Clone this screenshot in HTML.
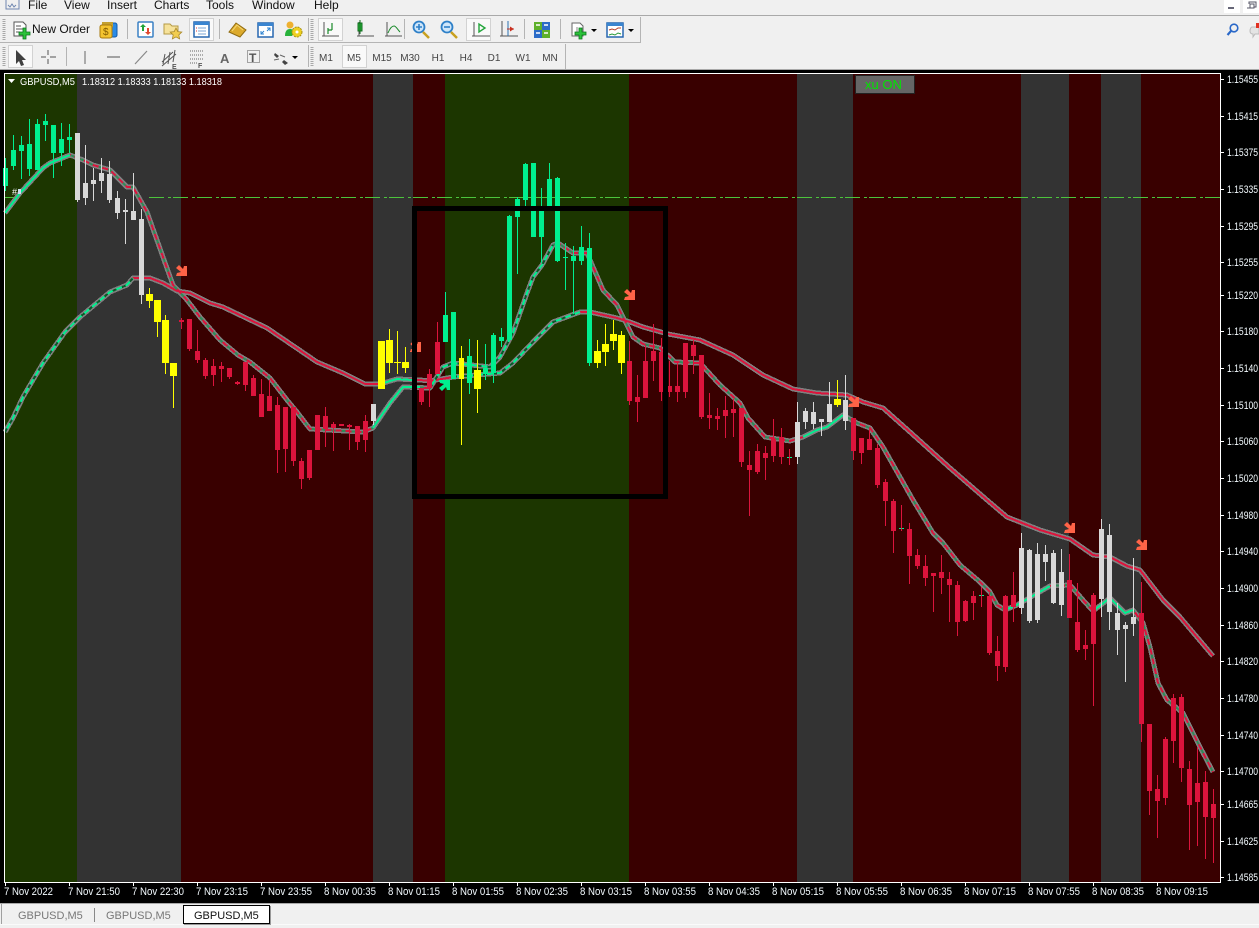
<!DOCTYPE html>
<html><head><meta charset="utf-8"><title>GBPUSD,M5</title>
<style>
html,body{margin:0;padding:0;width:1259px;height:928px;overflow:hidden;background:#f0f0f0}
svg{display:block}
text{font-family:"Liberation Sans",sans-serif}
.c{shape-rendering:crispEdges;fill:none}
.t{font-size:10.5px;fill:#fff}
.p{font-size:11px;fill:#f4fbff}
.m{font-size:12px;fill:#111}
.f{font-size:10px;fill:#444}
.tab{font-size:11px;fill:#777}
</style></head>
<body>
<svg xmlns="http://www.w3.org/2000/svg" width="1259" height="928" viewBox="0 0 1259 928">
<!-- chrome -->
<rect width="1259" height="928" fill="#f0f0f0"/>
<rect x="0" y="15" width="1259" height="1" fill="#a9a9a9"/>
<text class="m" x="28" y="9">File</text><text class="m" x="64" y="9">View</text><text class="m" x="107" y="9">Insert</text><text class="m" x="154" y="9">Charts</text><text class="m" x="206" y="9">Tools</text><text class="m" x="252" y="9">Window</text><text class="m" x="314" y="9">Help</text>
<g fill="none" stroke="#6f86b0"><path d="M6 0V9H19V0M8 5l2 2 2-3 2 3 2-2" stroke-width="1"/></g>
<rect x="1224" y="0" width="16" height="13" fill="#fff"/><rect x="1243" y="0" width="16" height="13" fill="#fff"/>
<rect x="1228" y="7" width="6" height="2" fill="#667"/>
<path d="M1247 8h7v-4h-4v4M1249 4V2h7v5h-2" fill="none" stroke="#556"/>
<!-- toolbar frame lines -->
<g class="c">
<path d="M0 42.500H640.500V17" stroke="#b4b4b4"/>
<path d="M0 69.500H1259" stroke="#a9a9a9"/>
<path d="M127.500 19V39M219.500 19V39M404.500 19V39M524.500 19V39M560.500 19V39M66.500 47V66M565.500 44V69M308.500 18V41M308.500 45V67" stroke="#b4b4b4"/>
<path d="M4 19V40M4 47V67M312 19V40M312 47V67" stroke="#a8a8a8" stroke-width="3" stroke-dasharray="1 1"/>
</g>
<!-- pressed buttons -->
<g fill="#f9f9f9" stroke="#d2d2d2"><rect x="189.500" y="18.500" width="24" height="22"/><rect x="318.500" y="18.500" width="24" height="22"/><rect x="466.500" y="18.500" width="24" height="22"/><rect x="8.500" y="45.500" width="24" height="22"/><rect x="342.500" y="45.500" width="24" height="22"/></g>
<!-- new order -->
<path d="M14 22h9l3 3v11H14z" fill="#fff" stroke="#555"/><path d="M16 26h5M16 29h7M16 32h4" stroke="#555"/>
<path d="M23 28h3v4h4v3h-4v4h-3v-4h-4v-3h4z" fill="#2cc23a" stroke="#0a7a1e" stroke-width=".8"/>
<text class="m" x="32" y="33" fill="#123" textLength="58" lengthAdjust="spacingAndGlyphs">New Order</text>
<!-- money -->
<rect x="107" y="23" width="10" height="14" rx="2" fill="#2b8be6" stroke="#135ba8"/><rect x="102" y="22" width="11" height="5" fill="#c4a030"/>
<rect x="100" y="25" width="12" height="13" rx="2" fill="#f4c430" stroke="#a87a10"/><text x="103" y="35" font-size="10" fill="#805a00">$</text>
<!-- updown -->
<rect x="138" y="22" width="15" height="15" rx="1" fill="#fff" stroke="#3a80c4" stroke-width="1.500"/>
<path d="M143 24l3 3h-2v4h-2v-4h-2z" fill="#22a53a"/><path d="M148 35l3-3h-2v-4h-2v4h-2z" fill="#e04a30"/>
<!-- folder star -->
<path d="M164 24h6l2 2h6v8h-14z" fill="#f6e29a" stroke="#b59a45"/><path d="M176 28l1.800 3.600 4 .5-3 2.800.8 4-3.600-2-3.600 2 .8-4-3-2.800 4-.5z" fill="#f2cd50" stroke="#a8872a" stroke-width=".8"/>
<!-- list -->
<rect x="194" y="22" width="15" height="15" fill="#fff" stroke="#2767b0" stroke-width="1.500"/><rect x="194" y="22" width="15" height="3" fill="#3a85d0"/><path d="M198 28h8M198 31h8M198 34h8" stroke="#7aa5d6"/><path d="M196 28h1M196 31h1" stroke="#d33"/>
<!-- book -->
<path d="M229 32l7-9 10 7-6 7z" fill="#dcaa2c" stroke="#8f6b10"/><path d="M232 31l5-6 6 5" fill="none" stroke="#f4d670"/>
<!-- expand -->
<rect x="258" y="23" width="15" height="14" fill="#fff" stroke="#2767b0" stroke-width="1.500"/><rect x="258" y="23" width="15" height="3" fill="#3a85d0"/><path d="M261 34l3-3M261 31v3h3M270 28l-3 3M267 28h3v3" stroke="#2a80d0" fill="none"/>
<!-- people gear -->
<circle cx="290" cy="25" r="3.500" fill="#eeb030"/><path d="M285 36c0-5 2-7 5-7 2 0 3 1 4 2l-2 5z" fill="#27b23a"/><circle cx="297" cy="32" r="5" fill="#eed020" stroke="#a89010" stroke-dasharray="2 1"/><circle cx="297" cy="32" r="1.500" fill="#fff"/>
<!-- charts type -->
<g fill="none" stroke="#555"><path d="M324 22v14h13M322 36h17"/><path d="M359 22v14h13M357 36h17"/><path d="M387 22v14h13M385 36h17"/><path d="M474 22v14h14M472 36h18"/><path d="M502 21v15h14M500 36h18"/></g>
<path d="M328 34v-6M332 30v-7M328 30h4" stroke="#1a8a2a" stroke-width="1.200" fill="none"/>
<rect x="358" y="23" width="4" height="8" fill="#24b838" stroke="#126a1e"/><path d="M360 20v14" stroke="#126a1e"/>
<path d="M388 33c2-5 4-7 6-7s3 3 6 6" stroke="#1a8a2a" fill="none"/>
<path d="M479 24v8l6-4z" fill="none" stroke="#22a53a" stroke-width="1.400"/>
<path d="M508 21v15" stroke="#2a70b0"/><path d="M514 29l-4-2.500v5z" fill="#c83020"/><path d="M507 29h7" stroke="#c83020"/>
<!-- zoom -->
<g fill="none"><circle cx="419" cy="27" r="5.500" stroke="#2e80c8" stroke-width="1.800" fill="#cfe6fa"/><path d="M423 32l6 6" stroke="#c8a020" stroke-width="2.500"/><path d="M416 27h6M419 24v6" stroke="#2e80c8" stroke-width="1.600"/>
<circle cx="447" cy="27" r="5.500" stroke="#2e80c8" stroke-width="1.800" fill="#cfe6fa"/><path d="M451 32l6 6" stroke="#c8a020" stroke-width="2.500"/><path d="M444 27h6" stroke="#2e80c8" stroke-width="1.600"/></g>
<!-- tile -->
<rect x="534" y="22" width="8" height="8" fill="#5eb02a"/><rect x="542" y="22" width="8" height="8" fill="#2c6cc8"/><rect x="534" y="30" width="8" height="8" fill="#2c6cc8"/><rect x="542" y="30" width="8" height="8" fill="#5eb02a"/>
<path d="M536 25h4M544 25h4M536 33h4M544 33h4" stroke="#fff" stroke-width="1.500"/>
<!-- new chart -->
<path d="M572 23h8l3 3v10h-11z" fill="#fff" stroke="#666"/><path d="M577 27v6h5" stroke="#888" fill="none"/><path d="M579 28h3v4h4v3h-4v4h-3v-4h-4v-3h4z" fill="#2cc23a" stroke="#0a7a1e" stroke-width=".8"/>
<path d="M591 29h6l-3 3z" fill="#000"/>
<!-- template -->
<rect x="607" y="23" width="16" height="14" fill="#fff" stroke="#2767b0" stroke-width="1.500"/><rect x="607" y="23" width="16" height="3" fill="#3a85d0"/><path d="M609 30l3-1 3 1 3-2 3 0" stroke="#b5402a" fill="none"/><path d="M609 35l3-1 3 1 3-2 3 1" stroke="#2a9a3a" fill="none"/>
<path d="M628 29h6l-3 3z" fill="#000"/>
<!-- search / bubble -->
<circle cx="1234" cy="28" r="3.800" fill="none" stroke="#2a68c8" stroke-width="1.600"/><path d="M1231 31l-3.500 4" stroke="#2a68c8" stroke-width="2.200"/>
<path d="M1252 27h7v7h-4l-2 3v-3c-2 0-3-1-3-3s1-4 2-4z" fill="#e4e4e4" stroke="#bbb"/><rect x="1256" y="23" width="3" height="5" fill="#e03020"/>
<!-- row 2 tools -->
<path d="M16 50l0 14 3-3 2 5 3-1-2-5h4z" fill="#404040"/>
<path d="M48 50v5M48 59v5M41 57h5M50 57h6" stroke="#555" fill="none"/>
<path d="M85 51v13" stroke="#666"/><path d="M107 57h13" stroke="#555"/><path d="M135 64l12-13" stroke="#888" stroke-width="1.200"/>
<path d="M162 62l11-10M162 66l14-12M165 54l-2 10M170 52l-2 12M175 50l-2 12" stroke="#555" fill="none"/><text x="172" y="69" font-size="7" font-weight="bold" fill="#555">E</text>
<path d="M190 51h14M190 55h14M190 59h14M190 63h8" stroke="#666" stroke-dasharray="1 1" fill="none"/><text x="198" y="68" font-size="7" font-weight="bold" fill="#555">F</text>
<text x="220" y="63" font-size="13" font-weight="bold" fill="#666">A</text>
<rect x="247.500" y="50.500" width="12" height="12" fill="none" stroke="#555" stroke-dasharray="1 1"/><text x="249" y="62" font-size="12" font-weight="bold" fill="#555">T</text>
<path d="M275 53l4 3-2 2-3-3zM284 60l4 3-3 2-3-3z" fill="#444"/><path d="M274 60l5-1M280 55l5 2" stroke="#666" fill="none"/><path d="M292 56h6l-3 3z" fill="#000"/>
<g class="f" text-anchor="middle"><text x="326" y="61">M1</text><text x="354" y="61">M5</text><text x="382" y="61">M15</text><text x="410" y="61">M30</text><text x="438" y="61">H1</text><text x="466" y="61">H4</text><text x="494" y="61">D1</text><text x="523" y="61">W1</text><text x="550" y="61">MN</text></g>

<!-- chart area -->
<rect x="0" y="70" width="1259" height="833" fill="#000"/>
<g class="c">
<g fill="#1c3600"><rect x="5" y="74" width="72" height="808"/><rect x="445" y="74" width="184" height="808"/></g>
<g fill="#333"><rect x="77" y="74" width="104" height="808"/><rect x="373" y="74" width="40" height="808"/><rect x="797" y="74" width="56" height="808"/><rect x="1021" y="74" width="48" height="808"/><rect x="1101" y="74" width="40" height="808"/></g>
<g fill="#390000"><rect x="181" y="74" width="192" height="808"/><rect x="413" y="74" width="32" height="808"/><rect x="629" y="74" width="168" height="808"/><rect x="853" y="74" width="168" height="808"/><rect x="1069" y="74" width="32" height="808"/><rect x="1141" y="74" width="80" height="808"/></g>

<!-- price line -->
<path d="M5 197.500H15" stroke="#4cc43c"/>
<path d="M149 197.500H1220" stroke="#4cc43c" stroke-dasharray="15 4 3 2"/>

<!-- MAs -->
<polyline points="5,432 13,418 23,397 43,363 65,332 80,317 110,292 127,285 133,278 150,278 163,283 177,291 190,293 210,303 223,307 267,328 295,347 317,362 343,373 365,384 380,384 397,379 420,380 430,381 453,377 500,373 513,363 533,342 553,322 580,312 590,312 617,318 630,322 643,327 668,334 700,340 733,355 763,375 793,389 817,393 847,395 863,402 883,408 910,432 950,468 987,500 1007,517 1040,530 1070,539 1093,555 1110,557 1127,566 1140,570 1163,600 1180,617 1213,656" stroke="#808080" stroke-width="5" stroke-linejoin="round"/>
<polyline points="5,213 20,193 43,168 50,163 70,155 83,160 93,165 110,170 127,187 133,187 147,212 163,257 173,285 187,300 200,317 220,340 238,355 250,362 270,378 287,400 297,412 310,429 363,432 373,428 390,403 403,387 430,388 443,367 453,363 490,367 500,357 513,333 527,293 533,277 542,265 553,245 558,243 573,253 587,253 603,290 617,305 633,337 643,344 660,348 675,362 700,363 720,385 740,403 748,418 765,437 790,441 803,437 817,430 827,427 843,415 857,423 870,428 883,447 913,500 933,533 943,543 960,565 980,582 990,592 997,605 1005,610 1017,605 1043,590 1050,586 1070,585 1083,600 1093,611 1110,598 1125,613 1133,610 1143,623 1150,647 1158,683 1167,700 1183,713 1200,747 1213,772" stroke="#808080" stroke-width="5" stroke-linejoin="round"/>
<polyline points="5,432 13,418 23,397 43,363 65,332 80,317 110,292 127,285 133,278 150,278 163,283 177,291 190,293 210,303 223,307 267,328 295,347 317,362 343,373 365,384 380,384 397,379 420,380 430,381 453,377 500,373 513,363 533,342 553,322 580,312 590,312 617,318 630,322 643,327 668,334 700,340 733,355 763,375 793,389 817,393 847,395 863,402 883,408 910,432 950,468 987,500 1007,517 1040,530 1070,539 1093,555 1110,557 1127,566 1140,570 1163,600 1180,617 1213,656" stroke="#dc143c" stroke-width="2"/>
<polyline points="5,213 20,193 43,168 50,163 70,155 83,160 93,165 110,170 127,187 133,187 147,212 163,257 173,285 187,300 200,317 220,340 238,355 250,362 270,378 287,400 297,412 310,429 363,432 373,428 390,403 403,387 430,388 443,367 453,363 490,367 500,357 513,333 527,293 533,277 542,265 553,245 558,243 573,253 587,253 603,290 617,305 633,337 643,344 660,348 675,362 700,363 720,385 740,403 748,418 765,437 790,441 803,437 817,430 827,427 843,415 857,423 870,428 883,447 913,500 933,533 943,543 960,565 980,582 990,592 997,605 1005,610 1017,605 1043,590 1050,586 1070,585 1083,600 1093,611 1110,598 1125,613 1133,610 1143,623 1150,647 1158,683 1167,700 1183,713 1200,747 1213,772" stroke="#dc143c" stroke-width="2"/>
<polyline points="5,213 20,193 43,168 50,163 70,155 83,160 93,165 110,170 127,187 133,187 147,212 163,257 173,285 187,300 200,317 220,340 238,355 250,362 270,378 287,400 297,412 310,429 363,432 373,428 390,403 403,387 430,388 443,367 453,363 490,367 500,357 513,333 527,293 533,277 542,265 553,245 558,243 573,253 587,253 603,290 617,305 633,337 643,344 660,348 675,362 700,363 720,385 740,403 748,418 765,437 790,441 803,437 817,430 827,427 843,415 857,423 870,428 883,447 913,500 933,533 943,543 960,565 980,582 990,592 997,605 1005,610 1017,605 1043,590 1050,586 1070,585 1083,600 1093,611 1110,598 1125,613 1133,610 1143,623 1150,647 1158,683 1167,700 1183,713 1200,747 1213,772" stroke="#2e8b57" stroke-width="2" stroke-dasharray="4 6"/>
<!-- green segments -->
<g stroke="#00f08f" stroke-width="2">
<polyline points="5,432 13,418 23,397 43,363 65,332 80,317 110,292 127,285 133,278"/>
<polyline points="5,213 20,193 43,168 50,163 70,155"/>
<polyline points="373,428 390,403 403,387 420,387"/>
<polyline points="380,384 397,379 412,380"/>
<polyline points="430,388 443,367 453,363 490,367 500,357 513,333 527,293 533,277 542,265 553,245"/>
<polyline points="453,377 500,373 513,363 533,342 553,322 580,312"/>
<polyline points="803,437 817,430 827,427 843,415"/>
<polyline points="1005,610 1017,605 1043,590 1050,586"/>
<polyline points="1093,611 1110,598 1125,613 1133,610"/>
</g>
<g stroke="#0a5a2a" stroke-width="2" stroke-dasharray="4 6">
<polyline points="5,432 13,418 23,397 43,363 65,332 80,317 110,292 127,285 133,278"/>
<polyline points="430,388 443,367 453,363 490,367 500,357 513,333 527,293 533,277 542,265 553,245"/>
<polyline points="453,377 500,373 513,363 533,342 553,322 580,312"/>
</g>

<!-- arrows under candles -->
<g fill="#ff6347" stroke="none">
<polygon transform="translate(410,341)" points="0,3 3,0 7,4 8,1 11,1 11,11 0,11 1,8 5,7"/>
</g>

<!-- candles: spring green -->
<path stroke="#00f08f" d="M5.500 158V191M13.500 135V170M21.500 136V179M29.500 119V176M37.500 119V170M45.500 114V141M53.500 125V178M61.500 123V166M69.500 124V153M445.500 292V342M453.500 312V379M469.500 339V394M485.500 344V380M493.500 333V383M501.500 328V347M509.500 215V340M517.500 197V274M525.500 163V206M533.500 163V237M541.500 188V263M549.500 163V206M557.500 177V262M565.500 243V290M573.500 246V314M581.500 226V265M589.500 233V366"/>
<path stroke="#00f08f" stroke-width="5" d="M5.500 168V186M13.500 150V166M21.500 145V151M29.500 144V169M37.500 124V170M45.500 121V125M53.500 125V153M61.500 139V153M69.500 137V140M445.500 315V342M453.500 312V379M469.500 356V383M485.500 368V374M493.500 335V373M501.500 337V341M509.500 216V340M517.500 199V217M525.500 164V200M533.500 163V237M541.500 211V237M549.500 179V206M557.500 178V261M565.500 257V258M573.500 256V261M581.500 247V261M589.500 248V363"/>
<path stroke="#00f08f" d="M787 457.500H792M899 528.500H904M979 595.500H984"/>
<!-- white -->
<path stroke="#d8d8d8" d="M77.500 133V202M85.500 145V205M93.500 168V201M101.500 158V193M109.500 161V203M117.500 191V219M125.500 199V244M133.500 173V220M141.500 209V304M373.500 404V425M797.500 402V464M805.500 408V429M813.500 402V429M821.500 422V436M829.500 382V422M845.500 375V430M1021.500 533V614M1029.500 549V623M1037.500 543V623M1045.500 545V581M1053.500 550V604M1061.500 549V616M1101.500 519V617M1109.500 524V630M1117.500 603V655M1125.500 622V682M1133.500 558V636"/>
<path stroke="#d8d8d8" stroke-width="5" d="M77.500 133V200M85.500 183V198M93.500 180V184M101.500 173V181M109.500 174V200M117.500 198V213M125.500 210V212M133.500 211V220M141.500 219V295M373.500 404V421M797.500 422V457M805.500 411V422M813.500 412V424M821.500 419V422M829.500 404V422M845.500 400V421M1021.500 548V608M1029.500 550V621M1037.500 554V620M1045.500 554V562M1053.500 553V603M1061.500 572V605M1101.500 529V599M1109.500 535V612M1117.500 613V630M1125.500 625V629M1133.500 617V624"/>
<!-- yellow -->
<path stroke="#ff0" d="M149.500 288V308M157.500 300V337M165.500 315V374M173.500 363V408M381.500 341V389M389.500 329V373M397.500 331V374M405.500 347V373M461.500 346V445M477.500 340V413M597.500 340V368M605.500 324V366M613.500 320V350M621.500 331V374M837.500 380V407"/>
<path stroke="#ff0" stroke-width="7" d="M149.500 294V301M157.500 300V322M165.500 320V363M173.500 363V376M381.500 341V389M389.500 340V363M397.500 362V363M405.500 362V368M477.500 370V389M597.500 351V363M605.500 344V352M613.500 334V341M621.500 335V363M837.500 399V405"/>
<path stroke="#ff0" stroke-width="5" d="M461.500 358V379"/>
<!-- crimson -->
<path stroke="#dc143c" d="M181.500 318V329M189.500 319V351M197.500 330V363M205.500 358V379M213.500 359V386M221.500 362V382M229.500 368V379M237.500 381V385M245.500 362V391M253.500 375V396M261.500 379V417M269.500 380V411M277.500 397V473M285.500 407V472M293.500 407V466M301.500 458V489M309.500 450V480M317.500 415V450M325.500 407V447M333.500 422V451M349.500 424V450M357.500 426V450M365.500 415V452M413.500 366V403M421.500 388V405M429.500 369V407M437.500 322V374M629.500 341V405M637.500 375V422M645.500 345V398M653.500 324V381M661.500 338V401M669.500 361V397M677.500 362V402M685.500 343V398M693.500 340V374M701.500 355V419M709.500 393V429M717.500 408V430M725.500 396V438M733.500 399V437M741.500 408V467M749.500 451V516M757.500 444V474M765.500 446V480M773.500 419V462M781.500 428V464M789.500 449V465M853.500 418V460M861.500 438V464M869.500 429V450M877.500 444V488M885.500 479V526M893.500 499V553M901.500 505V531M909.500 523V584M917.500 549V569M925.500 555V586M933.500 573V612M941.500 555V594M949.500 572V622M957.500 581V636M965.500 600V622M973.500 591V620M981.500 587V607M989.500 593V655M997.500 636V681M1005.500 595V672M1013.500 572V622M1069.500 554V618M1077.500 583V652M1085.500 630V660M1093.500 593V706M1141.500 582V742M1149.500 724V815M1157.500 775V838M1165.500 737V805M1173.500 694V763M1181.500 694V782M1189.500 761V850M1197.500 747V846M1205.500 771V859M1213.500 789V863"/>
<path stroke="#dc143c" stroke-width="5" d="M181.500 320V322M189.500 319V349M197.500 351V360M205.500 360V376M213.500 366V375M221.500 366V369M229.500 368V377M237.500 382V384M245.500 362V385M253.500 378V396M261.500 394V417M269.500 396V411M277.500 405V450M285.500 407V449M293.500 407V461M301.500 461V479M309.500 450V478M317.500 415V450M325.500 416V429M333.500 424V428M341.500 424V426M349.500 425V427M357.500 426V442M365.500 421V440M421.500 388V402M429.500 374V388M437.500 342V374M629.500 361V401M637.500 397V402M645.500 361V398M653.500 351V361M661.500 352V392M669.500 386V392M677.500 386V392M685.500 343V392M693.500 345V356M701.500 355V417M709.500 415V418M717.500 416V419M725.500 410V416M733.500 409V413M741.500 408V462M749.500 465V470M757.500 451V472M765.500 453V458M773.500 439V456M781.500 437V457M853.500 418V451M861.500 438V453M869.500 439V450M877.500 448V485M885.500 482V501M893.500 501V531M909.500 529V556M917.500 555V566M925.500 566V578M933.500 573V576M941.500 572V578M949.500 579V585M957.500 585V622M965.500 601V621M973.500 596V603M989.500 596V653M997.500 651V666M1005.500 596V667M1013.500 595V607M1069.500 580V618M1077.500 622V650M1085.500 645V649M1093.500 595V644M1141.500 613V724M1149.500 724V791M1157.500 789V801M1165.500 739V798M1173.500 698V741M1181.500 697V768M1189.500 769V805M1197.500 783V802M1205.500 782V817M1213.500 804V818"/>
</g>
<!-- arrows -->
<g fill="#ff6347">
<polygon transform="translate(176,265)" points="0,3 3,0 7,4 8,1 11,1 11,11 0,11 1,8 5,7"/>
<polygon transform="translate(624,289)" points="0,3 3,0 7,4 8,1 11,1 11,11 0,11 1,8 5,7"/>
<polygon transform="translate(848,396)" points="0,3 3,0 7,4 8,1 11,1 11,11 0,11 1,8 5,7"/>
<polygon transform="translate(1064,522)" points="0,3 3,0 7,4 8,1 11,1 11,11 0,11 1,8 5,7"/>
<polygon transform="translate(1136,539)" points="0,3 3,0 7,4 8,1 11,1 11,11 0,11 1,8 5,7"/>
</g>
<polygon transform="translate(439,380)" fill="#00f08f" points="0,8 3,11 7,7 8,10 11,10 11,0 0,0 1,3 5,4"/>
<!-- rectangle -->
<rect x="414.500" y="208.500" width="251" height="288" fill="none" stroke="#000" stroke-width="5" shape-rendering="crispEdges"/>
<!-- frame -->
<g class="c" stroke="#fff">
<path d="M4.500 73V882.500H1220.500V73.500H4.500"/>
<path d="M1221 79.500h3M1221 116.500h3M1221 152.500h3M1221 189.500h3M1221 226.500h3M1221 262.500h3M1221 295.500h3M1221 331.500h3M1221 368.500h3M1221 405.500h3M1221 441.500h3M1221 478.500h3M1221 515.500h3M1221 551.500h3M1221 588.500h3M1221 625.500h3M1221 661.500h3M1221 698.500h3M1221 735.500h3M1221 771.500h3M1221 804.500h3M1221 841.500h3M1221 877.500h3"/>
<path d="M5.500 883v3M69.500 883v3M133.500 883v3M197.500 883v3M261.500 883v3M325.500 883v3M389.500 883v3M453.500 883v3M517.500 883v3M581.500 883v3M645.500 883v3M709.500 883v3M773.500 883v3M837.500 883v3M901.500 883v3M965.500 883v3M1029.500 883v3M1093.500 883v3M1157.500 883v3"/>
</g>
<!-- header -->
<path d="M8 79h7l-3.500 4z" fill="#fff"/>
<text class="t" x="20" y="85" textLength="55" lengthAdjust="spacingAndGlyphs">GBPUSD,M5</text>
<text class="t" x="82" y="85" textLength="140" lengthAdjust="spacingAndGlyphs">1.18312 1.18333 1.18133 1.18318</text>
<text x="12" y="195" font-size="9" fill="#fff">#</text><rect x="18" y="189" width="3" height="5" fill="#cde"/>
<!-- button -->
<rect x="855.500" y="75.500" width="59" height="18" fill="#656565" stroke="#222"/>
<text x="865" y="89" font-size="13" fill="#00e600">xu ON</text>
<!-- prices -->
<g class="p">
<text x="1227" y="83" textLength="31" lengthAdjust="spacingAndGlyphs">1.15455</text>
<text x="1227" y="120" textLength="31" lengthAdjust="spacingAndGlyphs">1.15415</text>
<text x="1227" y="156" textLength="31" lengthAdjust="spacingAndGlyphs">1.15375</text>
<text x="1227" y="193" textLength="31" lengthAdjust="spacingAndGlyphs">1.15335</text>
<text x="1227" y="230" textLength="31" lengthAdjust="spacingAndGlyphs">1.15295</text>
<text x="1227" y="266" textLength="31" lengthAdjust="spacingAndGlyphs">1.15255</text>
<text x="1227" y="299" textLength="31" lengthAdjust="spacingAndGlyphs">1.15220</text>
<text x="1227" y="335" textLength="31" lengthAdjust="spacingAndGlyphs">1.15180</text>
<text x="1227" y="372" textLength="31" lengthAdjust="spacingAndGlyphs">1.15140</text>
<text x="1227" y="409" textLength="31" lengthAdjust="spacingAndGlyphs">1.15100</text>
<text x="1227" y="445" textLength="31" lengthAdjust="spacingAndGlyphs">1.15060</text>
<text x="1227" y="482" textLength="31" lengthAdjust="spacingAndGlyphs">1.15020</text>
<text x="1227" y="519" textLength="31" lengthAdjust="spacingAndGlyphs">1.14980</text>
<text x="1227" y="555" textLength="31" lengthAdjust="spacingAndGlyphs">1.14940</text>
<text x="1227" y="592" textLength="31" lengthAdjust="spacingAndGlyphs">1.14900</text>
<text x="1227" y="629" textLength="31" lengthAdjust="spacingAndGlyphs">1.14860</text>
<text x="1227" y="665" textLength="31" lengthAdjust="spacingAndGlyphs">1.14820</text>
<text x="1227" y="702" textLength="31" lengthAdjust="spacingAndGlyphs">1.14780</text>
<text x="1227" y="739" textLength="31" lengthAdjust="spacingAndGlyphs">1.14740</text>
<text x="1227" y="775" textLength="31" lengthAdjust="spacingAndGlyphs">1.14700</text>
<text x="1227" y="808" textLength="31" lengthAdjust="spacingAndGlyphs">1.14665</text>
<text x="1227" y="845" textLength="31" lengthAdjust="spacingAndGlyphs">1.14625</text>
<text x="1227" y="881" textLength="31" lengthAdjust="spacingAndGlyphs">1.14585</text>
</g>
<!-- times -->
<g class="p">
<text x="4" y="895" textLength="49" lengthAdjust="spacingAndGlyphs">7 Nov 2022</text>
<text x="68" y="895" textLength="52" lengthAdjust="spacingAndGlyphs">7 Nov 21:50</text>
<text x="132" y="895" textLength="52" lengthAdjust="spacingAndGlyphs">7 Nov 22:30</text>
<text x="196" y="895" textLength="52" lengthAdjust="spacingAndGlyphs">7 Nov 23:15</text>
<text x="260" y="895" textLength="52" lengthAdjust="spacingAndGlyphs">7 Nov 23:55</text>
<text x="324" y="895" textLength="52" lengthAdjust="spacingAndGlyphs">8 Nov 00:35</text>
<text x="388" y="895" textLength="52" lengthAdjust="spacingAndGlyphs">8 Nov 01:15</text>
<text x="452" y="895" textLength="52" lengthAdjust="spacingAndGlyphs">8 Nov 01:55</text>
<text x="516" y="895" textLength="52" lengthAdjust="spacingAndGlyphs">8 Nov 02:35</text>
<text x="580" y="895" textLength="52" lengthAdjust="spacingAndGlyphs">8 Nov 03:15</text>
<text x="644" y="895" textLength="52" lengthAdjust="spacingAndGlyphs">8 Nov 03:55</text>
<text x="708" y="895" textLength="52" lengthAdjust="spacingAndGlyphs">8 Nov 04:35</text>
<text x="772" y="895" textLength="52" lengthAdjust="spacingAndGlyphs">8 Nov 05:15</text>
<text x="836" y="895" textLength="52" lengthAdjust="spacingAndGlyphs">8 Nov 05:55</text>
<text x="900" y="895" textLength="52" lengthAdjust="spacingAndGlyphs">8 Nov 06:35</text>
<text x="964" y="895" textLength="52" lengthAdjust="spacingAndGlyphs">8 Nov 07:15</text>
<text x="1028" y="895" textLength="52" lengthAdjust="spacingAndGlyphs">8 Nov 07:55</text>
<text x="1092" y="895" textLength="52" lengthAdjust="spacingAndGlyphs">8 Nov 08:35</text>
<text x="1156" y="895" textLength="52" lengthAdjust="spacingAndGlyphs">8 Nov 09:15</text>
</g>
<!-- tabs -->
<rect x="0" y="903" width="1259" height="25" fill="#f0f0f0"/>
<g class="c">
<path d="M0 903.500H1259" stroke="#a9a9a9"/>
<path d="M1.500 904V924" stroke="#a0a0a0"/>
<path d="M94.500 908V922" stroke="#888"/>
<rect x="183.500" y="905.500" width="86" height="18" fill="#fff" stroke="#000"/>
<path d="M270.500 906V924.500H184" stroke="#999"/>
<path d="M0 924.500H183M271 924.500H1259" stroke="#fafafa"/>
</g>
<text class="tab" x="18" y="919">GBPUSD,M5</text>
<text class="tab" x="106" y="919">GBPUSD,M5</text>
<text class="tab" x="194" y="919" style="fill:#111">GBPUSD,M5</text>
</svg>
</body></html>
